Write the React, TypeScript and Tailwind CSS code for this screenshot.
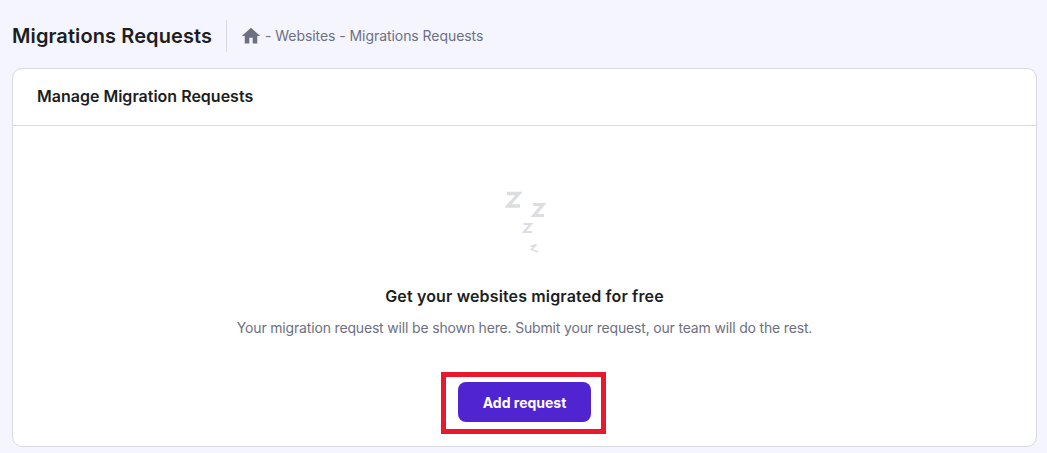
import React from 'react';

const font = { fontFamily: 'Inter, "Liberation Sans", sans-serif' };

const HomeIcon = () => (
  <svg className="w-5 h-5 text-[#6d7081]" viewBox="0 0 24 24" fill="currentColor">
    <path d="M10 21v-7h4v7h5.500v-9H23L12 2 1 12h3.500v9z" />
  </svg>
);

const SleepIcon = () => (
  <svg className="w-[42px] h-[65px] ml-[3px] shrink-0" viewBox="0 0 42 65" fill="none" stroke="#dcdde1" strokeLinejoin="miter">
    <path d="M2 3.500h12L3 16h12" strokeWidth="3.400" />
    <path d="M28 14.500h10L29 25.500h10" strokeWidth="3.200" />
    <path d="M18.500 34h7.500l-7 8h8" strokeWidth="2.200" />
    <path d="M25.500 56.500l6-2-5 5 6.500 2.500" strokeWidth="1.600" />
  </svg>
);

export default function App() {
  return (
    <div className="w-[1047px] h-[453px] overflow-hidden bg-[#f4f5ff] pl-3 pr-[10px] pt-5 flex flex-col" style={font}>
      <div className="flex items-center h-8">
        <h1 className="text-[20px] font-semibold text-[#1d1e20] tracking-[0.1px] w-[215px] border-r border-[#d8dae0] leading-8">
          Migrations Requests
        </h1>
        <div className="flex items-center ml-[14px] gap-[4px] text-[14px] tracking-[-0.06px] text-[#6d7081]">
          <HomeIcon />
          <span className="-mt-px">- Websites - Migrations Requests</span>
        </div>
      </div>

      <div className="mt-4 h-[379px] bg-white rounded-[10px] border border-[#d8dae0] flex flex-col">
        <div className="h-[57px] shrink-0 border-b border-[#d8dae0] flex items-center px-6 pb-[2px] text-[16px] font-semibold text-[#1d1e20]">
          Manage Migration Requests
        </div>
        <div className="flex-1 flex flex-col items-center pt-[64px]">
          <SleepIcon />
          <h2 className="mt-[31px] text-[16px] font-semibold leading-5 tracking-[0.14px] text-[#1d1e20]">Get your websites migrated for free</h2>
          <p className="mt-[12px] text-[14px] leading-5 tracking-[-0.17px] text-[#6d7081]">
            Your migration request will be shown here. Submit your request, our team will do the rest.
          </p>
          <div className="mt-[34px] mr-[2px] border-[5px] border-[#e8192c] pl-3 pr-[10px] pt-[5px] pb-[7px]">
            <button className="block w-[133px] h-10 rounded-lg bg-[#5025d1] text-white text-[14px] font-bold">
              Add request
            </button>
          </div>
        </div>
      </div>
    </div>
  );
}
